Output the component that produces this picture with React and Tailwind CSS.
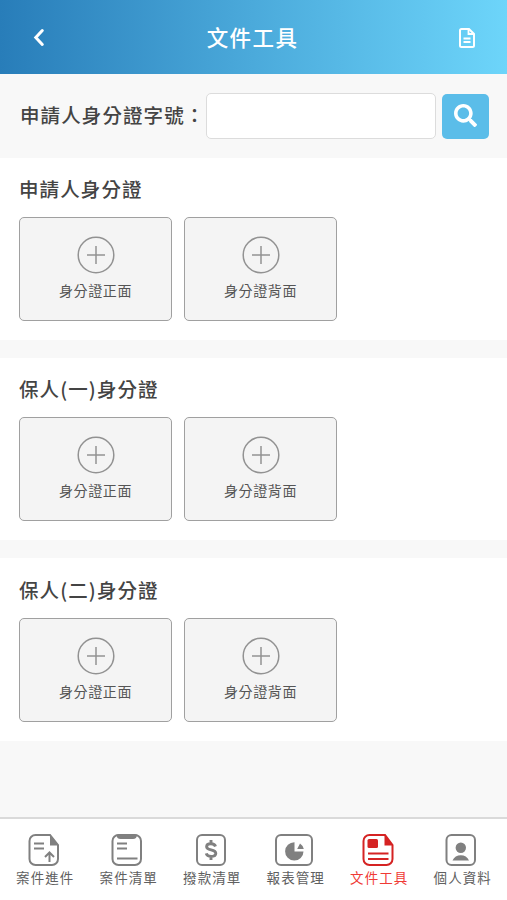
import React, { useState } from "react";
import { FaSearch } from "react-icons/fa";

const sections = [
  { id: "applicant", title: "申請人身分證" },
  { id: "guarantor1", title: "保人(一)身分證" },
  { id: "guarantor2", title: "保人(二)身分證" },
];

const CaseUploadIcon = () => (
  <svg width="32" height="34" viewBox="0 0 32 34" fill="none" stroke="currentColor" strokeWidth="2">
    <path d="M22 2H7.500a6 6 0 0 0-6 6v18a6 6 0 0 0 6 6h16.500a6 6 0 0 0 6-6V12z" />
    <path d="M22 1.500L30.700 12.500H22z" fill="currentColor" stroke="none" />
    <path d="M6 10.500h10M6 15.500h10" />
    <path d="M21.500 29v-9M17 24l4.500-4.500L26 24" />
  </svg>
);

const CaseListIcon = () => (
  <svg width="32" height="34" viewBox="0 0 32 34" fill="none" stroke="currentColor" strokeWidth="2">
    <rect x="1.500" y="2" width="28.500" height="30" rx="6" />
    <path d="M5.500 1.500h20.500c0 3-1.500 4.500-4 4.500H9.500C7 6 5.500 4.500 5.500 1.500z" fill="currentColor" stroke="none" />
    <path d="M6 10.500h10M6 15.500h10M6 25.500h20.500" />
  </svg>
);

const PaymentIcon = () => (
  <svg width="32" height="34" viewBox="0 0 32 34" fill="none" stroke="currentColor" strokeWidth="2">
    <rect x="2" y="2" width="28" height="30" rx="5" />
    <path d="M20.500 13.500c-.6-2-2.300-2.700-4.500-2.700-2.600 0-4.400 1-4.400 2.900 0 4.300 9.200 2 9.200 6.500 0 2.100-2 3.200-4.700 3.200-2.600 0-4.300-.9-4.900-3M16 7v4M16 23v4" strokeWidth="2.900" />
  </svg>
);

const ReportIcon = () => (
  <svg width="38" height="34" viewBox="0 0 38 34" fill="none" stroke="currentColor" strokeWidth="2">
    <rect x="1" y="2" width="36" height="30" rx="5" />
    <path d="M19.500 9.200a9.200 9.200 0 1 0 9 9.300h-9z" fill="currentColor" stroke="none" />
    <path d="M22.200 16L25 10.500a9 9 0 0 1 3.800 5.500z" fill="currentColor" stroke="none" />
  </svg>
);

const FileToolIcon = () => (
  <svg width="32" height="34" viewBox="0 0 32 34" fill="none" stroke="currentColor" strokeWidth="2">
    <path d="M23 2H7.500a6 6 0 0 0-6 6v18a6 6 0 0 0 6 6h17a6 6 0 0 0 6-6V12z" />
    <path d="M22.500 1.500L31 12.500H22.500z" fill="currentColor" stroke="none" />
    <rect x="5.500" y="6" width="10.500" height="9" rx="1.500" fill="currentColor" stroke="none" />
    <path d="M6 20.500h20.500M6 26h20.500" />
  </svg>
);

const ProfileIcon = () => (
  <svg width="32" height="34" viewBox="0 0 32 34" fill="none" stroke="currentColor" strokeWidth="2">
    <rect x="1.500" y="2" width="28.500" height="30" rx="5" />
    <circle cx="15.800" cy="14.800" r="5.200" fill="currentColor" stroke="none" />
    <path d="M7.500 27.500c1.500-3.500 4.600-5.200 8.300-5.200s6.700 1.700 8.200 5.200z" fill="currentColor" stroke="none" />
  </svg>
);

const navItems = [
  { label: "案件進件", icon: CaseUploadIcon },
  { label: "案件清單", icon: CaseListIcon },
  { label: "撥款清單", icon: PaymentIcon },
  { label: "報表管理", icon: ReportIcon },
  { label: "文件工具", icon: FileToolIcon },
  { label: "個人資料", icon: ProfileIcon },
];

function UploadCard({ label }) {
  return (
    <button className="flex h-[104px] w-[153px] flex-col items-center rounded-[5px] border-[1.5px] border-[#a0a0a0] bg-[#f4f4f4] pt-[18px]">
      <svg width="38" height="38" viewBox="0 0 38 38" fill="none" stroke="#929292" strokeWidth="1.5">
        <circle cx="19" cy="19" r="17.800" />
        <path d="M10 19h18M19 10v18" />
      </svg>
      <span className="mt-[6px] text-[14px] leading-5 tracking-[0.6px] text-[#555]">
        {label}
      </span>
    </button>
  );
}

export default function App() {
  const [idNumber, setIdNumber] = useState("");
  const [active, setActive] = useState("文件工具");

  return (
    <div className="flex h-[900px] w-full flex-col bg-[#f8f8f8] font-['Noto_Sans_CJK_TC',sans-serif] text-[#444]">
      {/* Header */}
      <header className="flex h-[74px] shrink-0 items-center justify-between bg-linear-to-r from-[#287db9] via-[#4baadb] to-[#6dd5fa] pr-[32px] pl-[33px] text-white">
        <button className="flex w-5 justify-start">
          <svg width="12" height="20" viewBox="0 0 12 20" fill="none" stroke="currentColor" strokeWidth="3" strokeLinecap="round">
            <path d="M9.300 3.500L2.800 10.500l6.500 7" />
          </svg>
        </button>
        <h1 className="pr-[3px] text-[21.500px] font-medium leading-8 tracking-[1.400px]">文件工具</h1>
        <button className="flex w-5 justify-end">
          <svg width="16" height="20" viewBox="0 0 16 20" fill="none" stroke="currentColor" strokeWidth="2" className="mt-px">
            <path d="M10 1H2.500A1.500 1.500 0 0 0 1 2.500v15A1.500 1.500 0 0 0 2.500 19h11a1.500 1.500 0 0 0 1.500-1.500V6z" />
            <path d="M9.500 1v5H15M4.500 10.500h7M4.500 14h7" strokeWidth="1.800" />
          </svg>
        </button>
      </header>

      {/* Search */}
      <div className="flex h-[84px] shrink-0 items-center pl-5">
        <label className="w-[186px] whitespace-nowrap pb-0.5 text-[19.500px] font-medium leading-7 tracking-[1.100px]">
          申請人身分證字號：
        </label>
        <input
          type="text"
          value={idNumber}
          onChange={(e) => setIdNumber(e.target.value)}
          className="h-[46px] w-[230px] rounded-[5px] border-[1.5px] border-[#dcdcdc] bg-white px-3 focus:outline-none"
        />
        <button className="ml-1.5 flex h-[45px] w-[47px] items-center justify-center rounded-[5px] bg-[#5bbde9] pr-px pb-0.5 text-white">
          <FaSearch size={23} />
        </button>
      </div>

      {/* Upload sections */}
      <main className="flex flex-col gap-[18px]">
        {sections.map((section) => (
          <section key={section.id} className="h-[182.200px] bg-white px-[19px] pt-[17.200px]">
            <h2 className="text-[19.500px] font-medium leading-7 tracking-[1.100px]">
              {section.title}
            </h2>
            <div className="mt-[14px] flex gap-3">
              <UploadCard label="身分證正面" />
              <UploadCard label="身分證背面" />
            </div>
          </section>
        ))}
      </main>

      {/* Bottom navigation */}
      <nav className="mt-auto flex h-[83px] shrink-0 border-t-2 border-[#dadada] bg-white pl-0.5 pr-1">
        {navItems.map(({ label, icon: Icon }) => (
          <button
            key={label}
            onClick={() => setActive(label)}
            className={`flex flex-1 flex-col items-center pt-3.5 ${
              active === label ? "text-[#d52323]" : "text-[#808080]"
            }`}
          >
            <Icon />
            <span
              className={`whitespace-nowrap pl-[3px] text-[13.500px] leading-5 tracking-[1.100px] ${
                active === label ? "text-[#f03a35]" : "text-[#606060]"
              }`}
            >
              {label}
            </span>
          </button>
        ))}
      </nav>
    </div>
  );
}
